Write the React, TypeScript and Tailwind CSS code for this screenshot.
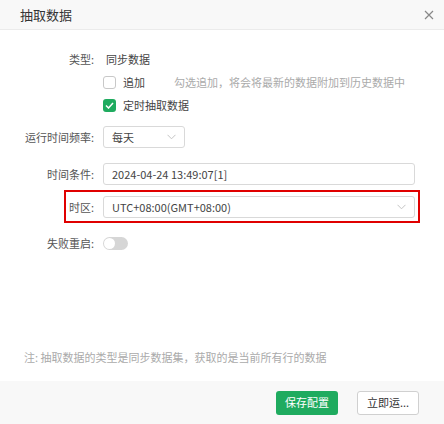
import React from 'react';

const font = { fontFamily: '"Noto Sans CJK SC", "Noto Sans", sans-serif' };

const Chevron = () => (
  <svg width="9" height="6" viewBox="0 0 9 6" className="shrink-0">
    <path d="M0.5 0.8 L4.5 4.8 L8.5 0.8" fill="none" stroke="#c4c4c4" strokeWidth="1" />
  </svg>
);

const Label = ({ children }: { children: React.ReactNode }) => (
  <div className="w-[95px] shrink-0 text-right pr-[1px] text-[11px] text-[#555]">{children}</div>
);

export default function App() {
  return (
    <div className="w-[444px] h-[424px] bg-white flex flex-col text-[#444]" style={font}>
      <div className="h-[30px] shrink-0 bg-[#f8f8f8] border-b border-[#ebebeb] flex items-center justify-between pl-[20px] pr-[10px]">
        <span className="text-[13px] text-[#333]">抽取数据</span>
        <svg width="10" height="10" viewBox="0 0 10 10">
          <path d="M1 1 L9 9 M9 1 L1 9" stroke="#888" strokeWidth="1.2" />
        </svg>
      </div>

      <div className="flex-1 flex flex-col pt-[18px]">
        <div className="h-[23px] flex items-center">
          <Label>类型:</Label>
          <span className="ml-[11px] text-[11px]">同步数据</span>
        </div>
        <div className="h-[23px] flex items-center pl-[103px]">
          <span className="w-[13px] h-[13px] rounded-[3px] border border-[#c8c8c8] bg-white" />
          <span className="ml-[7px] text-[11px] w-[51px]">追加</span>
          <span className="text-[11px] text-[#aaa]">勾选追加，将会将最新的数据附加到历史数据中</span>
        </div>
        <div className="h-[23px] flex items-center pl-[103px]">
          <span className="w-[13px] h-[13px] rounded-[3px] bg-[#1fab5f] flex items-center justify-center">
            <svg width="9" height="7" viewBox="0 0 9 7">
              <path d="M1 3.5 L3.5 6 L8 1" fill="none" stroke="white" strokeWidth="1.5" />
            </svg>
          </span>
          <span className="ml-[7px] text-[11px]">定时抽取数据</span>
        </div>

        <div className="mt-[9px] h-[22px] flex items-center">
          <Label>运行时间频率:</Label>
          <div className="ml-[8px] w-[82px] h-[22px] border border-[#d9d9d9] rounded-[3px] flex items-center justify-between pl-[8px] pr-[8px]">
            <span className="text-[11px]">每天</span>
            <Chevron />
          </div>
        </div>

        <div className="mt-[15px] h-[22px] flex items-center">
          <Label>时间条件:</Label>
          <div className="ml-[8px] w-[312px] h-[22px] border border-[#d9d9d9] rounded-[3px] flex items-center pl-[8px]">
            <span className="text-[11px]">2024-04-24 13:49:07[1]</span>
          </div>
        </div>

        <div className="relative mt-[11px] h-[22px] flex items-center">
          <span className="absolute left-[64px] top-[-6px] w-[356px] h-[33px] border-2 border-[#e00000] pointer-events-none" />
          <Label>时区:</Label>
          <div className="ml-[8px] w-[312px] h-[22px] border border-[#d9d9d9] rounded-[3px] flex items-center justify-between pl-[8px] pr-[8px]">
            <span className="text-[11px]">UTC+08:00(GMT+08:00)</span>
            <Chevron />
          </div>
        </div>

        <div className="mt-[18px] h-[14px] flex items-center">
          <Label>失败重启:</Label>
          <span className="ml-[8px] w-[25px] h-[13px] rounded-full bg-[#d6d6d6] relative">
            <span className="absolute left-[1px] top-[1px] w-[11px] h-[11px] rounded-full bg-white" />
          </span>
        </div>

        <div className="flex-1" />
        <div className="h-[16px] mb-[16px] pl-[24px] flex items-center text-[11px] text-[#aaa]">
          注: 抽取数据的类型是同步数据集，获取的是当前所有行的数据
        </div>
      </div>

      <div className="h-[43px] shrink-0 bg-[#f8f8f8] flex items-center justify-end pr-[25px] gap-[19px]">
        <button className="w-[62px] h-[24px] rounded-[3px] bg-[#1fab5f] text-white text-[11px]">保存配置</button>
        <button className="w-[62px] h-[24px] rounded-[3px] bg-white border border-[#d0d0d0] text-[#333] text-[11px]">立即运...</button>
      </div>
    </div>
  );
}
